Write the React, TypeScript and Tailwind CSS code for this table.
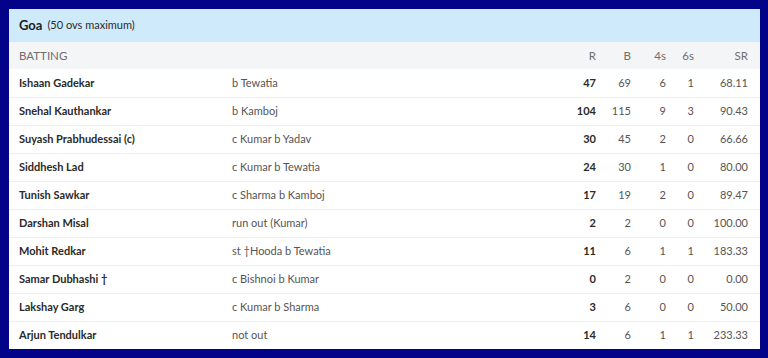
const rows = [
  { name: "Ishaan Gadekar", out: "b Tewatia", r: 47, b: 69, f: 6, s: 1, sr: "68.11" },
  { name: "Snehal Kauthankar", out: "b Kamboj", r: 104, b: 115, f: 9, s: 3, sr: "90.43" },
  { name: "Suyash Prabhudessai (c)", out: "c Kumar b Yadav", r: 30, b: 45, f: 2, s: 0, sr: "66.66" },
  { name: "Siddhesh Lad", out: "c Kumar b Tewatia", r: 24, b: 30, f: 1, s: 0, sr: "80.00" },
  { name: "Tunish Sawkar", out: "c Sharma b Kamboj", r: 17, b: 19, f: 2, s: 0, sr: "89.47" },
  { name: "Darshan Misal", out: "run out (Kumar)", r: 2, b: 2, f: 0, s: 0, sr: "100.00" },
  { name: "Mohit Redkar", out: "st †Hooda b Tewatia", r: 11, b: 6, f: 1, s: 1, sr: "183.33" },
  { name: "Samar Dubhashi †", out: "c Bishnoi b Kumar", r: 0, b: 2, f: 0, s: 0, sr: "0.00" },
  { name: "Lakshay Garg", out: "c Kumar b Sharma", r: 3, b: 6, f: 0, s: 0, sr: "50.00" },
  { name: "Arjun Tendulkar", out: "not out", r: 14, b: 6, f: 1, s: 1, sr: "233.33" },
];

const grid = "grid grid-cols-[213px_324px_40px_35px_35px_28px_54px] items-center";

export default function App() {
  return (
    <div className="w-[768px] h-[358px] bg-[#03038a] p-[9px] font-['Lato',sans-serif]">
      <div className="w-[751px] h-[340px] bg-white flex flex-col overflow-hidden">
        {/* Team header */}
        <div className="h-[33px] bg-[#cfeafb] flex items-center pl-[10px] gap-[5px]">
          <span className="text-[13px] font-bold text-[#1d1d1d]">Goa</span>
          <span className="text-[11px] text-[#2b2b2b]">(50 ovs maximum)</span>
        </div>

        {/* Column headings */}
        <div className={`${grid} h-[27px] bg-[#f4f5f7] pl-[10px] pr-[12px] text-[11.5px] text-[#6e6e6e]`}>
          <span>BATTING</span>
          <span />
          <span className="text-right">R</span>
          <span className="text-right">B</span>
          <span className="text-right">4s</span>
          <span className="text-right">6s</span>
          <span className="text-right">SR</span>
        </div>

        {rows.map((row, i) => (
          <div
            key={row.name}
            className={`${grid} h-[28px] pl-[10px] pr-[12px] text-[11px] text-[#555] ${i > 0 ? "border-t border-[#eceef1]" : ""}`}
          >
            <span className="font-bold text-[#2a2a2a]">{row.name}</span>
            <span>{row.out}</span>
            <span className="text-right font-bold text-[#2a2a2a]">{row.r}</span>
            <span className="text-right">{row.b}</span>
            <span className="text-right">{row.f}</span>
            <span className="text-right">{row.s}</span>
            <span className="text-right">{row.sr}</span>
          </div>
        ))}
      </div>
    </div>
  );
}
